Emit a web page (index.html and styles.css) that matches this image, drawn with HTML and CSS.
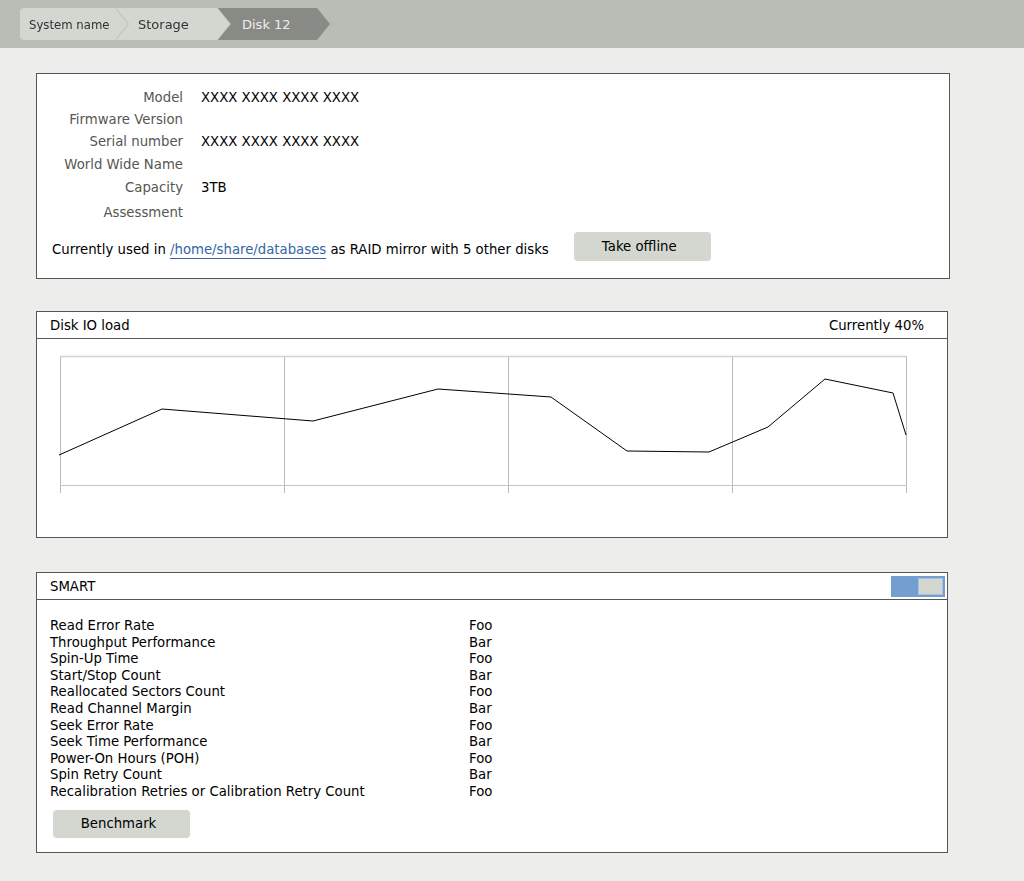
FILE: index.html
```html
<!DOCTYPE html>
<html>
<head>
<meta charset="utf-8">
<link rel="stylesheet" href="styles.css">
</head>
<body>
<header class="topbar">
  <nav class="crumbs">
    <div class="crumb crumb-first"><span class="crumb-shape">System name</span></div>
    <div class="crumb crumb-mid"><span class="crumb-shape">Storage</span></div>
    <div class="crumb crumb-active"><span class="crumb-shape">Disk 12</span></div>
  </nav>
</header>

<main class="content">
  <section class="panel panel-info">
    <div class="info-grid">
      <div class="lbl">Model</div><div class="val">XXXX XXXX XXXX XXXX</div>
      <div class="lbl">Firmware Version</div><div class="val"></div>
      <div class="lbl">Serial number</div><div class="val">XXXX XXXX XXXX XXXX</div>
      <div class="lbl">World Wide Name</div><div class="val"></div>
      <div class="lbl">Capacity</div><div class="val">3TB</div>
      <div class="lbl">Assessment</div><div class="val"></div>
    </div>
    <div class="usage">
      <span class="usage-text">Currently used in <a class="link" href="#">/home/share/databases</a> as RAID mirror with 5 other disks</span>
      <button class="btn btn-offline">Take offline</button>
    </div>
  </section>

  <section class="panel panel-io">
    <div class="panel-head">
      <span>Disk IO load</span>
      <span>Currently 40%</span>
    </div>
    <div class="chart-body">
      <svg class="chart" width="910" height="197" viewBox="0 0 910 197">
        <g stroke="#babdb6" stroke-width="1" fill="none">
          <line x1="23.5" y1="17" x2="23.5" y2="154"/>
          <line x1="247.5" y1="17" x2="247.5" y2="154"/>
          <line x1="471.5" y1="17" x2="471.5" y2="154"/>
          <line x1="695.5" y1="17" x2="695.5" y2="154"/>
          <line x1="869.5" y1="17" x2="869.5" y2="154"/>
        </g>
        <g stroke="#d3d4d0" stroke-width="1.5" fill="none">
          <line x1="23" y1="17.5" x2="870" y2="17.5"/>
        </g>
        <g stroke="#c6c7c3" stroke-width="1" fill="none">
          <line x1="23" y1="146.5" x2="870" y2="146.5"/>
        </g>
        <polyline fill="none" stroke="#000" stroke-width="1" points="22,116 125,70 276,82 401,50 514,58 590,112 672,113 731,88 788,40 856,54 869,96"/>
      </svg>
    </div>
  </section>

  <section class="panel panel-smart">
    <div class="panel-head panel-head-smart">
      <span>SMART</span>
      <span class="toggle"><span class="toggle-knob"></span></span>
    </div>
    <div class="smart-body">
      <div class="smart-grid">
        <div>Read Error Rate</div><div>Foo</div>
        <div>Throughput Performance</div><div>Bar</div>
        <div>Spin-Up Time</div><div>Foo</div>
        <div>Start/Stop Count</div><div>Bar</div>
        <div>Reallocated Sectors Count</div><div>Foo</div>
        <div>Read Channel Margin</div><div>Bar</div>
        <div>Seek Error Rate</div><div>Foo</div>
        <div>Seek Time Performance</div><div>Bar</div>
        <div>Power-On Hours (POH)</div><div>Foo</div>
        <div>Spin Retry Count</div><div>Bar</div>
        <div>Recalibration Retries or Calibration Retry Count</div><div>Foo</div>
      </div>
      <button class="btn btn-bench">Benchmark</button>
    </div>
  </section>
</main>
</body>
</html>
```
FILE: styles.css
```css
* { box-sizing: border-box; }

html, body {
  margin: 0;
  padding: 0;
}

body {
  background: #ededeb;
  font-family: "DejaVu Sans", "Liberation Sans", sans-serif;
  font-size: 13.27px;
  color: #1c1c1c;
  width: 1024px;
  height: 881px;
  overflow: hidden;
}

/* top bar & breadcrumbs */
.topbar {
  height: 48px;
  background: #babdb6;
  padding: 8px 0 0 20px;
}

.crumbs {
  display: flex;
  height: 32px;
}

.crumb {
  position: relative;
  height: 32px;
  filter: drop-shadow(1px 0 0 #b9bcb4);
}

.crumb-shape {
  display: flex;
  align-items: center;
  height: 32px;
  background: #d3d7cf;
  color: #2e3436;
  font-size: 13px;
  clip-path: polygon(0 0, calc(100% - 13px) 0, 100% 50%, calc(100% - 13px) 100%, 0 100%);
}

.crumb-first { z-index: 3; }
.crumb-first .crumb-shape {
  width: 108px;
  padding-left: 9px;
  border-radius: 4px 0 0 4px;
  font-family: "DejaVu Sans Condensed", "DejaVu Sans", sans-serif;
  font-stretch: condensed;
}

.crumb-mid { z-index: 2; margin-left: -13px; }
.crumb-mid .crumb-shape {
  width: 115px;
  padding-left: 23px;
}

.crumb-active { z-index: 1; margin-left: -13px; filter: none; }
.crumb-active .crumb-shape {
  width: 113px;
  padding-left: 25px;
  background: #888a85;
  color: #eeeeec;
}

/* panels */
.content {
  display: flex;
  flex-direction: column;
  padding-left: 36px;
}

.panel {
  background: #fff;
  border: 1px solid #555753;
}

.panel-info {
  width: 914px;
  height: 206px;
  margin-top: 25px;
  padding-top: 12px;
}

.info-grid {
  display: grid;
  grid-template-columns: 146px 1fr;
  grid-template-rows: 22px 22px 23px 23px 22px 28px;
  column-gap: 18px;
  align-items: center;
}

.lbl {
  text-align: right;
  color: #555753;
}

.val {
  color: #000;
}

.usage {
  display: flex;
  align-items: center;
  margin-top: 6px;
  padding-left: 15px;
}

.usage-text {
  padding-top: 5px;
  color: #000;
}

.link {
  color: #3465a4;
  text-decoration: underline;
  text-decoration-color: #3465a4;
  text-underline-offset: 4px;
}

.btn {
  font-family: "DejaVu Sans", "Liberation Sans", sans-serif;
  font-size: 13.27px;
  color: #000;
  background: #d3d7cf;
  border: none;
  border-radius: 4px;
  padding: 0;
}

.btn-offline {
  width: 137px;
  height: 29px;
  margin-left: 25px;
  padding-right: 6px;
  padding-bottom: 1px;
}

.panel-io {
  width: 912px;
  height: 227px;
  margin-top: 32px;
}

.panel-head {
  display: flex;
  justify-content: space-between;
  align-items: center;
  height: 27px;
  padding: 0 23px 0 13px;
  border-bottom: 1px solid #555753;
  color: #000;
}

.chart-body {
  height: 197px;
}

.chart {
  display: block;
}

.panel-smart {
  width: 912px;
  height: 281px;
  margin-top: 34px;
}

.panel-head-smart {
  height: 27px;
  padding-right: 2px;
}

.toggle {
  display: flex;
  justify-content: flex-end;
  align-items: center;
  width: 54px;
  height: 21px;
  padding-right: 2px;
  background: #729fcf;
}

.toggle-knob {
  width: 25px;
  height: 17px;
  background: #d3d7cf;
  border: 1px solid #a7c1e0;
}

.smart-body {
  padding: 18px 13px 0 13px;
}

.smart-grid {
  display: grid;
  grid-template-columns: 419px 1fr;
  grid-auto-rows: 16.6px;
  line-height: 16.6px;
  color: #000;
}

.btn-bench {
  width: 137px;
  height: 28px;
  margin: 9px 0 0 3px;
  padding-right: 6px;
}
```
